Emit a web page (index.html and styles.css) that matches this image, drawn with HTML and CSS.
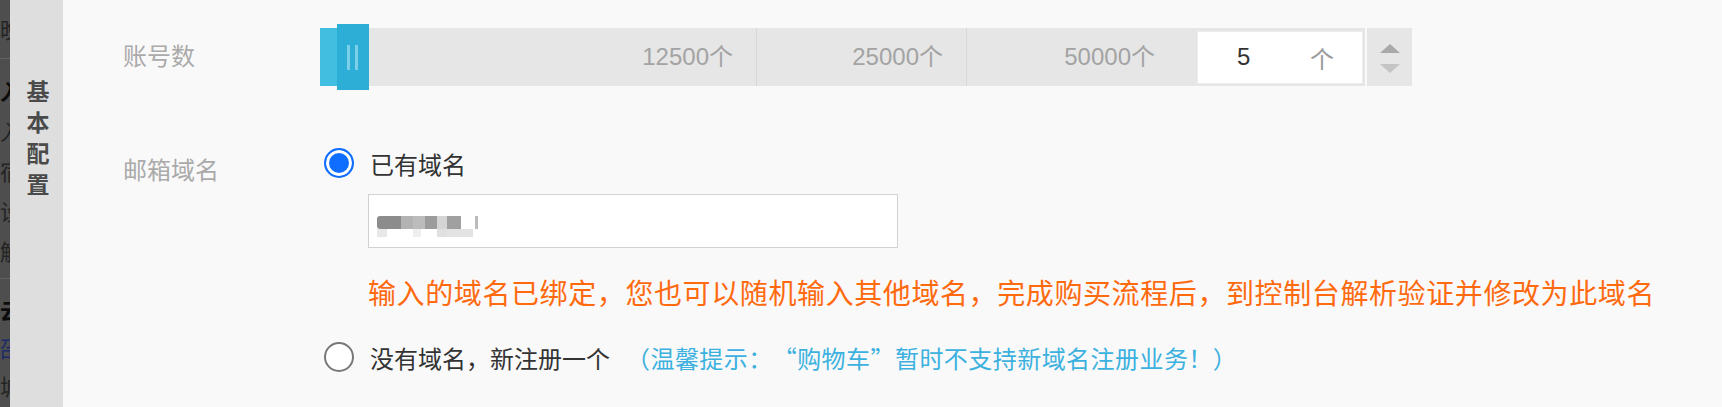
FILE: index.html
```html
<!DOCTYPE html>
<html lang="zh-CN">
<head>
<meta charset="utf-8">
<title>基本配置</title>
<link rel="stylesheet" href="styles.css">
</head>
<body>
<div class="page">
  <div class="strip">
    <div class="strip-group g1"><span class="s-item">晚</span></div>
    <div class="strip-group g2">
      <span class="s-item bold">入</span>
      <span class="s-item">入</span>
      <span class="s-item">宿</span>
      <span class="s-item">设</span>
      <span class="s-item">解</span>
    </div>
    <div class="strip-group g3">
      <span class="s-item bold">云</span>
      <span class="s-item blue">邵</span>
      <span class="s-item">城</span>
    </div>
  </div>
  <div class="side"><div class="side-title">基<br>本<br>配<br>置</div></div>
  <div class="main">
    <div class="row row-count">
      <div class="label">账号数</div>
      <div class="slider">
        <div class="track">
          <div class="fill"></div>
          <div class="handle"><i></i><i></i></div>
          <div class="seg seg1">12500个</div>
          <div class="seg seg2">25000个</div>
          <div class="seg seg3">50000个</div>
          <div class="numbox"><span class="num">5</span><span class="unit">个</span></div>
        </div>
        <div class="spinner"><span class="up"></span><span class="down"></span></div>
      </div>
    </div>
    <div class="row row-domain">
      <div class="label label-domain">邮箱域名</div>
      <div class="options">
        <div class="opt"><span class="radio on"></span><span class="opt-text">已有域名</span></div>
        <div class="domain-input">
          <div class="mosaic"><div class="m1"></div><div class="m2"></div></div>
        </div>
        <p class="warn">输入的域名已绑定，您也可以随机输入其他域名，完成购买流程后，到控制台解析验证并修改为此域名</p>
        <div class="opt opt2"><span class="radio"></span><span class="opt-text">没有域名，新注册一个</span><span class="tip">（温馨提示：“购物车”暂时不支持新域名注册业务！）</span></div>
      </div>
    </div>
  </div>
</div>
</body>
</html>
```
FILE: styles.css
```css
* { box-sizing: border-box; }
html, body { margin: 0; padding: 0; }
body {
  width: 1722px;
  height: 407px;
  overflow: hidden;
  font-family: "Liberation Sans", "Noto Sans CJK SC", sans-serif;
  background: #f9f9f9;
  text-spacing-trim: space-all;
}
.page { display: flex; height: 407px; }

/* dimmed left strip */
.strip {
  width: 10px;
  flex: none;
  background: #4e4e4e;
  overflow: hidden;
  display: flex;
  flex-direction: column;
}
.strip-group { display: flex; flex-direction: column; border-bottom: 1px solid #626262; }
.g1 { height: 61px; padding-top: 11px; }
.g2 { height: 228px; padding-top: 14px; }
.g3 { border-bottom: none; padding-top: 14px; }
.s-item {
  display: block;
  height: 40px;
  line-height: 40px;
  font-size: 22px;
  color: #232323;
  white-space: nowrap;
}
.g3 .s-item { height: 38px; line-height: 38px; }
.s-item.bold { font-weight: bold; color: #0c0c0c; }
.s-item.blue { color: #1c2b66; }

/* side title */
.side {
  width: 53px;
  flex: none;
  background: #dedede;
  padding-top: 77px;
  padding-left: 3px;
}
.side-title {
  text-align: center;
  font-size: 23px;
  line-height: 31px;
  font-weight: bold;
  color: #4a4a4a;
}

/* main content */
.main { flex: 1; padding: 24px 0 0 60px; }
.row { display: flex; }
.label {
  width: 197px;
  flex: none;
  font-size: 24px;
  color: #aaaaaa;
}
.row-count .label { line-height: 66px; }

.slider { display: flex; align-items: center; height: 66px; }
.track {
  width: 1045px;
  height: 58px;
  background: #e6e6e6;
  display: flex;
  align-items: center;
  padding-right: 2px;
}
.fill { width: 17px; height: 58px; background: #42bee0; flex: none; }
.handle {
  width: 32px;
  height: 66px;
  flex: none;
  background: #2caed6;
  display: flex;
  justify-content: center;
  align-items: center;
  gap: 5px;
  padding-right: 1px;
}
.handle i { display: block; width: 3px; height: 25px; background: #7ccfe9; }
.seg {
  height: 58px;
  flex: none;
  text-align: right;
  font-size: 24px;
  line-height: 58px;
  color: #a3a3a3;
}
.seg1 { width: 388px; padding-right: 23px; border-right: 1px solid #d8d8d8; }
.seg2 { width: 210px; padding-right: 23px; border-right: 1px solid #d8d8d8; }
.seg3 { width: 230px; padding-right: 42px; }
.numbox {
  width: 166px;
  height: 53px;
  flex: none;
  background: #fff;
  border: 1px solid #ededed;
  display: flex;
  justify-content: space-between;
  align-items: center;
  padding: 0 28px 0 39px;
  font-size: 24px;
}
.num { color: #333; }
.unit { color: #9a9a9a; }
.spinner {
  margin-left: 2px;
  width: 45px;
  height: 58px;
  background: #e6e6e6;
  display: flex;
  flex-direction: column;
  align-items: center;
  padding-top: 16px;
  gap: 11px;
}
.up, .down { width: 0; height: 0; border-left: 10px solid transparent; border-right: 10px solid transparent; }
.up { border-bottom: 9px solid #a9a9a9; }
.down { border-top: 9px solid #c4c4c4; }

/* domain row */
.row-domain { margin-top: 58px; }
.label-domain { padding-top: 8px; line-height: 30px; }
.options { display: flex; flex-direction: column; }
.opt { display: flex; align-items: center; height: 30px; margin-left: 4px; }
.radio {
  width: 30px;
  height: 30px;
  flex: none;
  border-radius: 50%;
  border: 2px solid #787878;
  background: #fff;
}
.radio.on {
  border: 2px solid #0f6dff;
  background: #0f6dff;
  box-shadow: inset 0 0 0 3px #fff;
}
.opt-text { margin-left: 16px; font-size: 24px; color: #333; white-space: nowrap; }
.tip {
  margin-left: 16px;
  font-family: "Noto Sans CJK SC", sans-serif;
  font-size: 24px;
  letter-spacing: 0.45px;
  color: #3cb1df;
  white-space: nowrap;
}

.domain-input {
  margin: 16px 0 0 48px;
  width: 530px;
  height: 54px;
  background: #fff;
  border: 1px solid #d2d2d2;
  padding: 21px 0 0 8px;
}
.mosaic { width: 104px; }
.m1 {
  height: 13px;
  border-radius: 3px 0 0 3px;
  background: linear-gradient(90deg,
    #8c8c8c 0 24px, #b3b3b3 24px 36px, #bcbcbc 36px 48px, #9c9c9c 48px 60px,
    #d5d5d5 60px 70px, #a0a0a0 70px 84px, transparent 84px 98px, #bbbbbb 98px 101px, transparent 101px);
}
.m2 {
  height: 8px;
  background: linear-gradient(90deg,
    #e8e8e8 0 10px, transparent 10px 36px, #efefef 36px 44px, transparent 44px 60px,
    #e0e0e0 60px 70px, #e3e3e3 70px 96px, transparent 96px);
}
.warn {
  margin: 27px 0 0 48px;
  font-size: 28px;
  letter-spacing: 0.6px;
  line-height: 40px;
  color: #ff6a0f;
  white-space: nowrap;
}
.opt2 { margin-top: 27px; }
```
